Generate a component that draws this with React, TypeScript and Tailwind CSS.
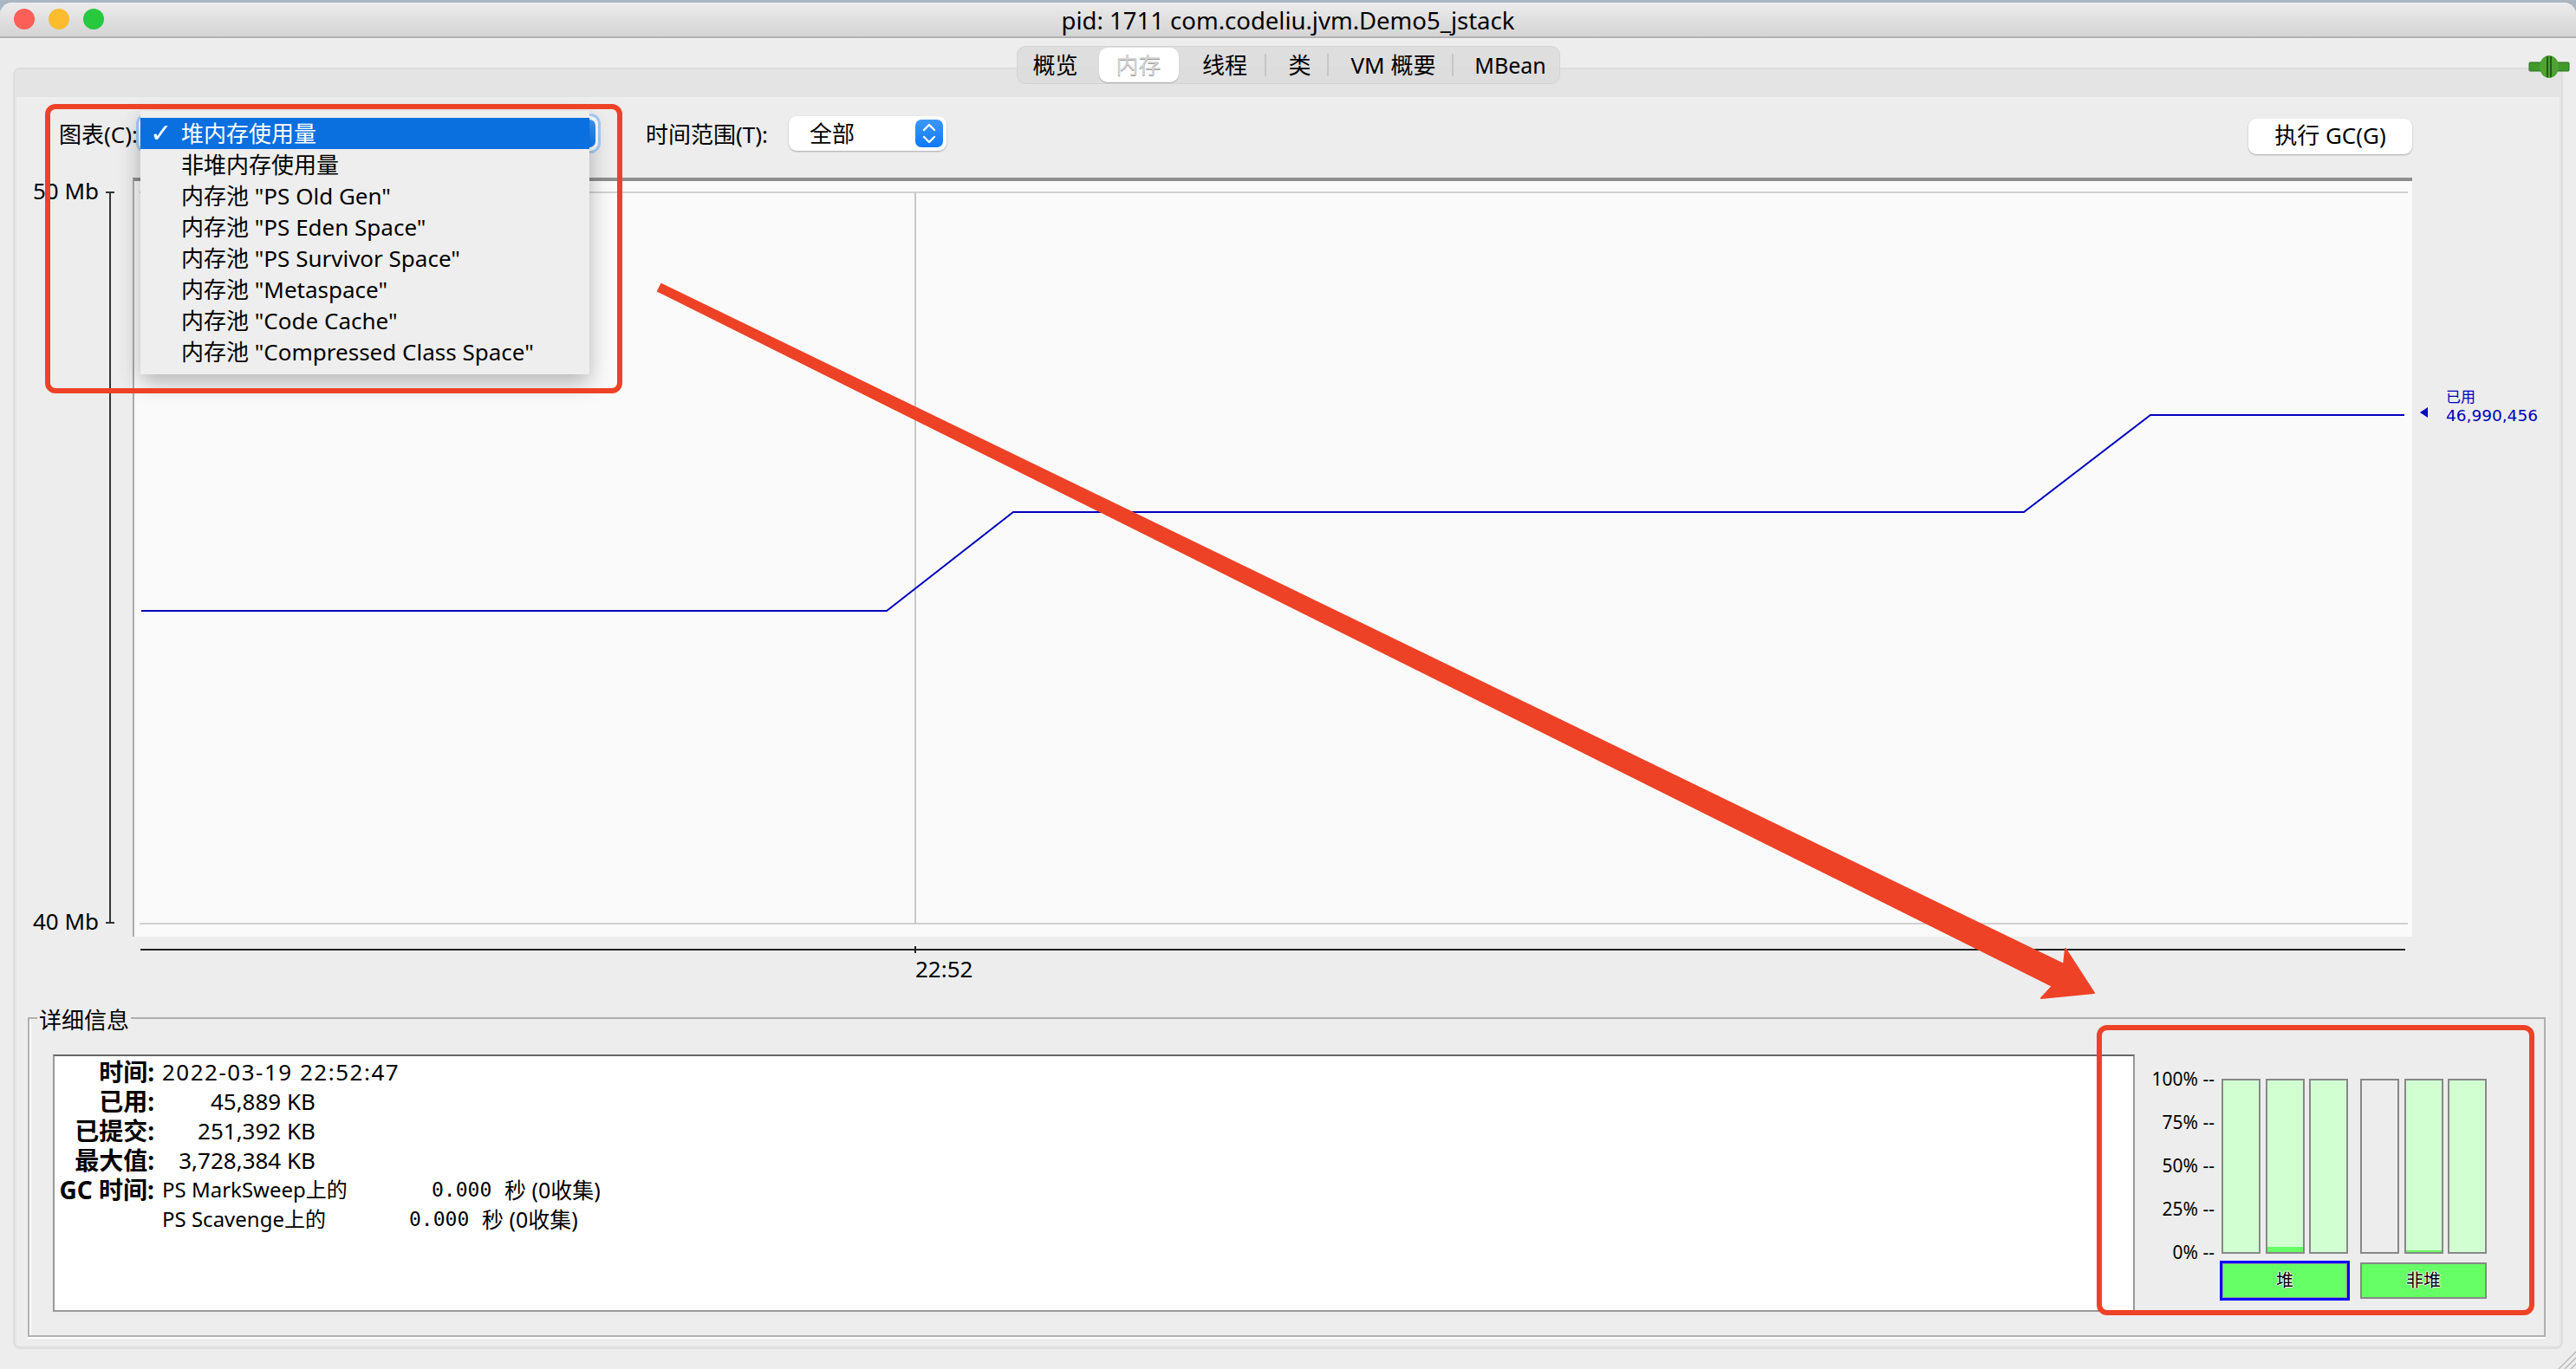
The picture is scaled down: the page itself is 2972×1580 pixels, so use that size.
import { ReactNode } from 'react';

const memoryPools = [
  '非堆内存使用量',
  '内存池 "PS Old Gen"',
  '内存池 "PS Eden Space"',
  '内存池 "PS Survivor Space"',
  '内存池 "Metaspace"',
  '内存池 "Code Cache"',
  '内存池 "Compressed Class Space"',
];

const infoRows = [
  { label: '时间:', value: '2022-03-19 22:52:47', wide: true },
  { label: '已用:', value: '45,889 KB' },
  { label: '已提交:', value: '251,392 KB' },
  { label: '最大值:', value: '3,728,384 KB' },
];

const gaugeTicks = ['100% --', '75% --', '50% --', '25% --', '0% --'];

function Stepper() {
  return (
    <div className="w-[32px] h-[32px] rounded-[7px] bg-gradient-to-b from-[#3b98fb] to-[#0a79f8] flex items-center justify-center">
      <svg width="20" height="26" viewBox="0 0 20 26" fill="none" stroke="#fff" strokeWidth="2.4" strokeLinecap="round" strokeLinejoin="round">
        <path d="M4 9 L10 3 L16 9" />
        <path d="M4 17 L10 23 L16 17" />
      </svg>
    </div>
  );
}

function Tab({ children, sep }: { children: ReactNode; sep?: boolean }) {
  return (
    <div className={`h-[26px] pl-[8px] flex items-center justify-center ${sep ? 'border-r-2 border-[#c6c6c6]' : ''}`}>
      {children}
    </div>
  );
}

function GaugeBar({ fill, empty }: { fill: number; empty?: boolean }) {
  return (
    <div className={`w-[45px] h-[202px] border-2 border-[#888888] flex flex-col justify-end ${empty ? 'bg-[#ededed]' : 'bg-[#d2ffd2]'}`}>
      {fill > 0 && <div className="bg-[#66ff66]" style={{ height: fill }} />}
    </div>
  );
}

function GaugeGroup({ bars, label, selected }: { bars: { fill: number; empty?: boolean }[]; label: string; selected?: boolean }) {
  return (
    <div className="w-[146px] flex flex-col">
      <div className="flex justify-between">
        {bars.map((b, i) => (
          <GaugeBar key={i} fill={b.fill} empty={b.empty} />
        ))}
      </div>
      {selected ? (
        <div className="mt-[8px] -mx-[2px] h-[46px] border-[3px] border-[#0000ff] bg-[#66ff66] shadow-[inset_0_0_0_1px_#999] flex items-center justify-center text-[20px] text-black [text-shadow:1px_0_0_#fff,-1px_0_0_#fff,0_1px_0_#fff,0_-1px_0_#fff]">
          {label}
        </div>
      ) : (
        <div className="mt-[10px] h-[42px] border-2 border-[#888888] bg-[#66ff66] flex items-center justify-center text-[20px] text-black [text-shadow:1px_0_0_#fff,-1px_0_0_#fff,0_1px_0_#fff,0_-1px_0_#fff]">
          {label}
        </div>
      )}
    </div>
  );
}

export default function App() {
  return (
    <div className="relative w-[2972px] h-[1580px] overflow-hidden bg-[#aab6c2] pt-[3px] font-['Noto_Sans','Noto_Sans_CJK_SC',sans-serif] text-black">
      <div className="h-[1577px] rounded-t-[14px] bg-[#ededed] flex flex-col overflow-hidden">
        {/* title bar */}
        <div className="relative h-[41px] shrink-0 pt-[2px] bg-gradient-to-b from-[#ececec] to-[#d4d4d4] border-b-2 border-[#b2b2b2] flex items-center justify-center text-[27.5px] leading-none">
          <div className="absolute left-[16px] top-[7px] flex gap-[16px]">
            <div className="w-[24px] h-[24px] rounded-full bg-[#fc5f58]" />
            <div className="w-[24px] h-[24px] rounded-full bg-[#fdbc2e]" />
            <div className="w-[24px] h-[24px] rounded-full bg-[#28c83f]" />
          </div>
          pid: 1711 com.codeliu.jvm.Demo5_jstack
        </div>

        {/* tabs */}
        <div className="relative z-10 shrink-0 flex justify-center mt-[9px] -mb-[19px]">
          <div className="w-[627px] h-[44px] rounded-[10px] bg-[#dcdcdc]/90 border border-[#d4d4d4] flex items-center text-[26px] leading-none">
            <div className="w-[94px] pr-[6px] text-center">概览</div>
            <div className="w-[92px] h-[40px] rounded-[10px] bg-white shadow-[0_1px_1px_#aaa] flex items-center justify-center text-[#d4d4d4] [text-shadow:0_1px_0_#999]">内存</div>
            <div className="w-[101px]">
              <Tab sep>线程</Tab>
            </div>
            <div className="w-[72px]">
              <Tab sep>类</Tab>
            </div>
            <div className="w-[144px]">
              <Tab sep>VM 概要</Tab>
            </div>
            <div className="flex-1 pl-[10px] text-center text-[25px]">MBean</div>
          </div>
        </div>

        {/* content panel */}
        <div className="relative mx-[15px] h-[1479px] shrink-0 rounded-[8px] border-2 border-[#dedede] bg-[#e4e4e4] pt-[32px] px-[2px] pb-[2px]">
          <div className="h-full bg-[#ededed] flex flex-col">
            {/* toolbar */}
            <div className="h-[93px] shrink-0 relative flex items-center pb-[9px] text-[26px] leading-none">
              <span className="ml-[49px] w-[92px] whitespace-nowrap mt-[2px]">图表(C):</span>
              <div className="w-[530px] h-[40px] rounded-[9px] bg-white shadow-[0_0_0_3px_#a6cdf9] flex justify-end items-center pr-[3px]">
                <Stepper />
              </div>
              <span className="ml-[55px] w-[165px] whitespace-nowrap mt-[2px]">时间范围(T):</span>
              <div className="w-[182px] h-[40px] rounded-[9px] bg-white shadow-[0_1px_2px_#aaa] flex items-center justify-between pl-[24px] pr-[4px]">
                全部
                <Stepper />
              </div>
              <div className="ml-auto mt-[6px] mr-[170px] w-[189px] h-[41px] rounded-[9px] bg-white shadow-[0_1px_2px_#aaa] flex items-center justify-center pb-[2px]">
                执行 GC(G)
              </div>
            </div>

            {/* chart row */}
            <div className="h-[876px] shrink-0 flex">
              <div className="w-[134px] shrink-0 flex pt-[16px] pb-[15px]">
                <div className="w-[95px] -mt-[1px] mb-[3px] flex flex-col justify-between items-end text-[26px] leading-none">
                  <div className="h-0 flex items-center">50 Mb</div>
                  <div className="h-0 flex items-center">40 Mb</div>
                </div>
                <div className="ml-[8px] w-[10px] flex flex-col items-center">
                  <div className="w-[10px] h-[2px] bg-[#333]" />
                  <div className="w-[2px] flex-1 bg-[#333]" />
                  <div className="w-[10px] h-[2px] bg-[#333]" />
                </div>
              </div>
              <div className="relative w-[2630px] shrink-0 border-t-4 border-l-2 border-t-[#8e8e8e] border-l-[#aaaaaa] bg-[#fafafa]">
                <svg className="absolute -left-[2px] -top-[4px]" width="2630" height="876" viewBox="0 0 2630 876">
                  <line x1="8" y1="17" x2="2625" y2="17" stroke="#d0d0d0" strokeWidth="2" />
                  <line x1="8" y1="861" x2="2625" y2="861" stroke="#d0d0d0" strokeWidth="2" />
                  <line x1="903" y1="17" x2="903" y2="861" stroke="#c8c8c8" strokeWidth="2" />
                  <polyline points="10,500 870,500 1016,386 2182,386 2328,274 2621,274" fill="none" stroke="#0000c0" strokeWidth="2" />
                </svg>
              </div>
              <div className="flex-1 pt-[243px] pl-[9px] flex text-[#0000c0]">
                <svg className="mt-[22px] shrink-0" width="9" height="12" viewBox="0 0 9 12">
                  <path d="M0 6 L9 0 L9 12 Z" fill="#0000c0" />
                </svg>
                <div className="ml-[21px] font-['DejaVu_Sans','Noto_Sans_CJK_SC',sans-serif] text-[18.5px] leading-[21px]">
                  <div className="text-[17px]">已用</div>
                  <div>46,990,456</div>
                </div>
              </div>
            </div>

            {/* x axis */}
            <div className="h-[93px] shrink-0 pl-[143px] pt-[14px]">
              <div className="relative w-[2613px] h-[2px] bg-[#222]">
                <div className="absolute left-[893px] -top-[3px] w-[2px] h-[8px] bg-[#222]" />
              </div>
              <div className="ml-[894px] mt-[8px] text-[26px] leading-[26px]">22:52</div>
            </div>

            {/* details */}
            <div className="relative ml-[13px] w-[2905px] h-[369px] shrink-0 border-2 border-[#b0b0b0] shadow-[0_2px_0_#fff,inset_2px_0_0_#fff] flex pl-[27px] pt-[41px]">
              <div className="absolute left-[9px] -top-[16px] px-[2px] bg-[#ededed] text-[26px] leading-[34px]">详细信息</div>
              <div className="w-[2402px] h-[297px] shrink-0 bg-white border-2 border-[#999999] border-t-[#666666] pt-[1px] text-[26px] leading-[34px]">
                {infoRows.map((r) => (
                  <div key={r.label} className="flex h-[34px]">
                    <div className="w-[115px] text-right font-bold text-[28px] whitespace-nowrap">{r.label}</div>
                    {r.wide ? (
                      <div className="ml-[9px] tracking-[1.5px]">{r.value}</div>
                    ) : (
                      <div className="ml-[9px] w-[177px] text-right">{r.value}</div>
                    )}
                  </div>
                ))}
                <div className="flex h-[34px]">
                  <div className="w-[115px] text-right font-bold text-[28px] whitespace-nowrap">GC 时间:</div>
                  <div className="ml-[9px] w-[212px] text-[24px] whitespace-nowrap">PS MarkSweep上的</div>
                  <div className="ml-[99px] w-[70px] font-['DejaVu_Sans_Mono',monospace] text-[23px]">0.000</div>
                  <div className="ml-[14px] text-[25px]">秒 (0收集)</div>
                </div>
                <div className="flex h-[34px]">
                  <div className="w-[115px]" />
                  <div className="ml-[9px] w-[186px] text-[24px] whitespace-nowrap">PS Scavenge上的</div>
                  <div className="ml-[99px] w-[70px] font-['DejaVu_Sans_Mono',monospace] text-[23px]">0.000</div>
                  <div className="ml-[14px] text-[25px]">秒 (0收集)</div>
                </div>
              </div>

              <div className="flex pt-[28px]">
                <div className="w-[92px] h-[200px] flex flex-col justify-between items-end text-[21px] leading-none">
                  {gaugeTicks.map((t) => (
                    <div key={t} className="h-0 flex items-center whitespace-pre">{t}</div>
                  ))}
                </div>
                <div className="ml-[8px] flex gap-[14px]">
                  <GaugeGroup label="堆" selected bars={[{ fill: 0 }, { fill: 6 }, { fill: 0 }]} />
                  <GaugeGroup label="非堆" bars={[{ fill: 0, empty: true }, { fill: 2 }, { fill: 0 }]} />
                </div>
              </div>
            </div>
          </div>
        </div>
      </div>

      {/* open combo popup */}
      <div className="absolute left-[162px] top-[128px] w-[518px] h-[304px] py-[8px] bg-[#eeeeee] shadow-[0_10px_24px_rgba(0,0,0,0.28)] text-[26px] leading-none">
        <div className="h-[36px] bg-[#0a6fdf] text-white flex items-center">
          <span className="w-[47px] pl-[11px] font-['DejaVu_Sans',sans-serif] text-[30px]">✓</span>
          堆内存使用量
        </div>
        {memoryPools.map((p) => (
          <div key={p} className="h-[36px] pl-[47px] flex items-center whitespace-pre">{p}</div>
        ))}
      </div>

      {/* connection plug */}
      <svg className="absolute left-[2916px] top-[62px]" width="50" height="30" viewBox="0 0 50 30">
        <rect x="2" y="10" width="46" height="10" rx="1" fill="#3f9a2a" stroke="#2b6e1c" />
        <ellipse cx="25" cy="15" rx="11" ry="13" fill="#4ea332" />
        <path d="M23 3 V27 M27 3 V27" stroke="#1f5c14" strokeWidth="2" />
      </svg>

      {/* window grip */}
      <svg className="absolute left-[2950px] top-[1558px]" width="22" height="22" viewBox="0 0 22 22" stroke="#bbb" strokeWidth="1.5">
        <path d="M2 22 L22 2 M9 22 L22 9 M16 22 L22 16" />
      </svg>

      {/* red annotations */}
      <div className="absolute left-[52px] top-[120px] w-[666px] h-[334px] rounded-[12px] border-[6px] border-[#ee4227]" />
      <div className="absolute left-[2419px] top-[1183px] w-[505px] h-[335px] rounded-[12px] border-[6px] border-[#ee4227]" />
      <svg className="absolute left-0 top-0 pointer-events-none" width="2972" height="1580" viewBox="0 0 2972 1580">
        <path d="M763 328 L2381 1113 L2383 1095 L2416 1146 L2355 1152 L2368 1138 L759 336 Z" fill="#ee4227" strokeLinejoin="round" stroke="#ee4227" strokeWidth="2" />
      </svg>
    </div>
  );
}
